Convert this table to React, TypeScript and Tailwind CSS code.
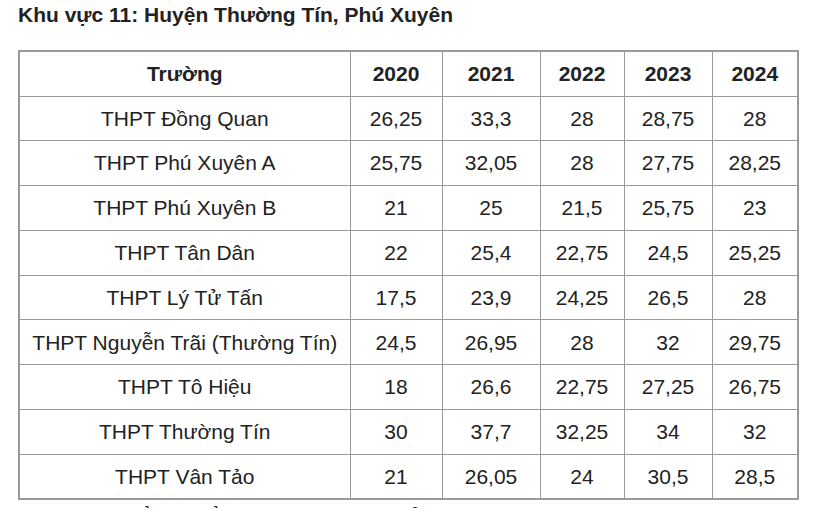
const rows: [string, string, string, string, string, string][] = [
  ["THPT Đồng Quan", "26,25", "33,3", "28", "28,75", "28"],
  ["THPT Phú Xuyên A", "25,75", "32,05", "28", "27,75", "28,25"],
  ["THPT Phú Xuyên B", "21", "25", "21,5", "25,75", "23"],
  ["THPT Tân Dân", "22", "25,4", "22,75", "24,5", "25,25"],
  ["THPT Lý Tử Tấn", "17,5", "23,9", "24,25", "26,5", "28"],
  ["THPT Nguyễn Trãi (Thường Tín)", "24,5", "26,95", "28", "32", "29,75"],
  ["THPT Tô Hiệu", "18", "26,6", "22,75", "27,25", "26,75"],
  ["THPT Thường Tín", "30", "37,7", "32,25", "34", "32"],
  ["THPT Vân Tảo", "21", "26,05", "24", "30,5", "28,5"],
]

const years = ["2020", "2021", "2022", "2023", "2024"]
const widths = ["w-[331px]", "w-[92px]", "w-[98px]", "w-[84px]", "w-[88px]", "w-[86px]"]

export default function App() {
  return (
    <div className="h-[508px] overflow-hidden bg-white text-[#222] font-['Liberation_Sans',Arial,sans-serif]">
      <div className="pl-[18px] pt-[3px]">
        <h2 className="text-[21px] font-bold leading-[24px]">Khu vực 11: Huyện Thường Tín, Phú Xuyên</h2>

        <table className="mt-[23px] w-[780px] table-fixed border-collapse border-2 border-[#9a9a9a] text-[21px]">
          <colgroup>
            {widths.map((w, i) => (
              <col key={i} className={w} />
            ))}
          </colgroup>
          <thead>
            <tr className="h-[45px]">
              <th className="border border-[#9a9a9a] text-center font-bold">Trường</th>
              {years.map((y) => (
                <th key={y} className="border border-[#9a9a9a] text-center font-bold">{y}</th>
              ))}
            </tr>
          </thead>
          <tbody>
            {rows.map((r) => (
              <tr key={r[0]} className="h-[44.8px]">
                {r.map((c, i) => (
                  <td key={i} className="border border-[#9a9a9a] text-center">{c}</td>
                ))}
              </tr>
            ))}
          </tbody>
        </table>

        <p className="mt-[4px] pl-[100px] text-[21px] leading-[24px]">Điểm chuẩn lớp 10 các trường ở khu vực này</p>
      </div>
    </div>
  )
}
